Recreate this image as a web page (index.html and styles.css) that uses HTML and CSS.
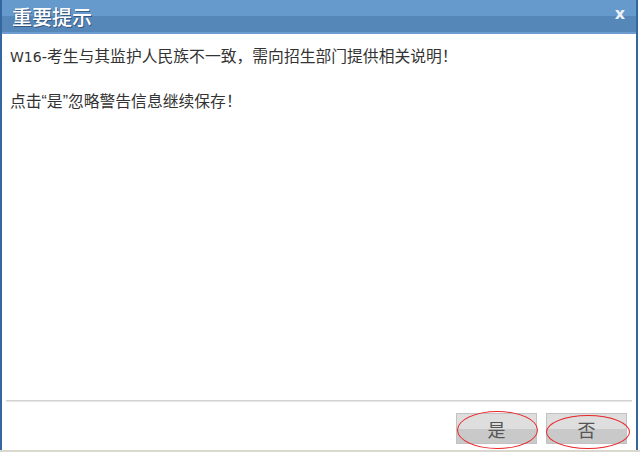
FILE: index.html
```html
<!DOCTYPE html>
<html lang="zh-CN">
<head>
  <meta charset="UTF-8" />
  <title>重要提示</title>
  <link rel="stylesheet" href="styles.css">
</head>
<body>

  <div class="dialog">
    <div class="dialog-title">
      <span class="title-text">重要提示</span>
      <span class="close">x</span>
    </div>

    <div class="dialog-body">
      <p><span class="code">W16</span>-考生与其监护人民族不一致，需向招生部门提供相关说明！</p>
      <p>点击“是”忽略警告信息继续保存！</p>
    </div>

    <div class="separator"></div>

    <div class="actions">
      <button class="btn btn-yes">是</button>
      <button class="btn btn-no">否</button>
    </div>
  </div>

  <div class="page-edge"></div>

</body>
</html>
```

FILE: styles.css
```css
body {
  margin: 0;
  background: #fff;
  font-family: "Noto Sans CJK SC", "Noto Sans", sans-serif;
  color: #333;
}

.dialog {
  width: 638px;
  height: 450px;
  box-sizing: border-box;
  border-left: 2px solid #3467a0;
  border-right: 2px solid #3467a0;
  display: flex;
  flex-direction: column;
}

.dialog-title {
  height: 32px;
  background: linear-gradient(#6699cc 50%, #5587b9 50%);
  border-bottom: 2px solid #6c9dd1;
  display: flex;
  align-items: center;
  justify-content: space-between;
  padding: 0 11px 0 10px;
}

.title-text {
  color: #fff;
  font-size: 20px;
  font-weight: 500;
  text-shadow: 1px 1px 0 rgba(45, 70, 105, 0.75), -1px 0 0 rgba(45, 70, 105, 0.3);
}

.close {
  color: #eef2f7;
  font-family: "DejaVu Sans", sans-serif;
  font-size: 16px;
  font-weight: bold;
  margin-top: -5px;
}

.dialog-body {
  flex: 1;
  padding: 12px 8px 0;
  font-family: "Liberation Sans", "Noto Sans CJK SC", sans-serif;
  font-size: 15.8px;
  line-height: 22px;
}

.dialog-body p {
  margin: 0 0 23px;
}

.code {
  font-family: "DejaVu Sans", sans-serif;
  font-size: 14px;
}

.separator {
  margin: 0 4px;
  border-top: 1px solid #d2d2d2;
  border-bottom: 1px solid #e6e6e6;
}

.actions {
  display: flex;
  justify-content: flex-end;
  gap: 9px;
  padding: 11px 9px 6px;
}

.btn {
  position: relative;
  width: 81px;
  height: 31px;
  border: 1px solid #c2c2c2;
  background: linear-gradient(#dedede 50%, #c9c9c9 50%);
  color: #555;
  font-family: "Noto Sans CJK SC", serif;
  font-size: 18px;
  padding: 0;
}

.btn::after {
  content: "";
  position: absolute;
  border: 1px solid #e8262a;
  border-radius: 50%;
}

.btn-yes::after {
  left: 0;
  top: -3px;
  width: 79px;
  height: 36px;
}

.btn-no::after {
  left: -1px;
  top: 1px;
  width: 82px;
  height: 32px;
}

.page-edge {
  height: 2px;
  background: #d9d9d0;
}
```
